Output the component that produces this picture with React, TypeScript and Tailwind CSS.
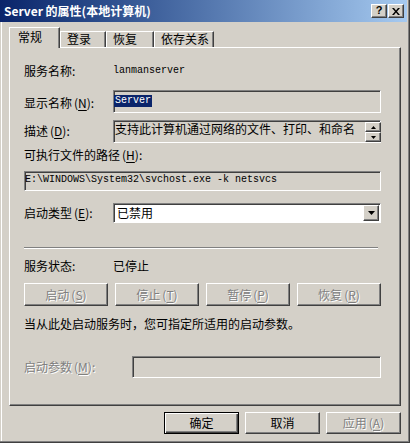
const raised =
  'border border-t-white border-l-white border-r-[#404040] border-b-[#404040] shadow-[inset_-1px_-1px_#808080]';
const sunken =
  'border border-t-[#808080] border-l-[#808080] border-r-white border-b-white shadow-[inset_1px_1px_#404040]';
const disabledText = 'text-[#808080] [text-shadow:1px_1px_0_#fff]';

// 带助记符的标签，例如 显示名称(N):
const Mn = ({ text, k, colon = true }: { text: string; k: string; colon?: boolean }) => (
  <span className="whitespace-nowrap">
    {text}
    <span className="ml-[2px]">(</span>
    <span className="underline underline-offset-[2px]">{k}</span>)
    {colon ? ':' : ''}
  </span>
);

const TitleBar = () => (
  <div className="w-[407px] h-[22px] shrink-0 flex items-center bg-linear-to-r from-[#0a246a] to-[#a6caf0] pl-[4px] pr-[3px]">
    <span className="flex-1 text-white font-bold text-[12px] leading-[14px] whitespace-nowrap">
      Server 的属性(本地计算机)
    </span>
    <div className="flex gap-[1px]">
      <div className={`w-[16px] h-[14px] bg-[#d4d0c8] ${raised} flex items-center justify-center`}>
        <span className="font-['Liberation_Sans',sans-serif] font-bold text-[11px] leading-[11px] -mt-px">?</span>
      </div>
      <div className={`w-[16px] h-[14px] bg-[#d4d0c8] ${raised} flex items-center justify-center`}>
        <svg width="8" height="7" viewBox="0 0 8 7">
          <path d="M0 0h2l2 2.5L6 0h2L5 3.5 8 7H6L4 4.5 2 7H0l3-3.5z" fill="#000" />
        </svg>
      </div>
    </div>
  </div>
);

const tabs = [
  { name: '登录', w: 'w-[46px]' },
  { name: '恢复', w: 'w-[48px]' },
  { name: '依存关系', w: 'w-[60px]' },
];

const Tabs = () => (
  <div className="relative z-10 mt-[5px] ml-[9px] h-[21px] -mb-px flex items-end shrink-0">
    <div className="w-[51px] h-[21px] bg-[#d4d0c8] border-t border-l border-r border-t-white border-l-white border-r-[#404040] shadow-[inset_-1px_0_#808080] pl-[8px] pt-[2px]">
      常规
    </div>
    {tabs.map((t) => (
      <div
        key={t.name}
        className={`${t.w} h-[16px] mb-px bg-[#d4d0c8] border-t border-l border-r border-t-white border-l-white border-r-[#404040] shadow-[inset_-1px_0_#808080] pl-[6px]`}
      >
        {t.name}
      </div>
    ))}
  </div>
);

const Button = ({ children, disabled }: { children: React.ReactNode; disabled?: boolean }) => (
  <div
    className={`w-[84px] h-[23px] bg-[#d4d0c8] ${raised} flex items-center justify-center ${disabled ? disabledText : ''}`}
  >
    {children}
  </div>
);

const Panel = () => (
  <div className="ml-[9px] w-[392px] h-[359px] shrink-0 border border-t-white border-l-white border-r-[#404040] border-b-[#404040] shadow-[inset_-1px_-1px_#808080] pl-[14px] pr-[19px] flex flex-col">
    {/* 服务名称 */}
    <div className="mt-[16px] h-[14px] flex items-center">
      <span className="w-[89px]">服务名称:</span>
      <span className="font-['Liberation_Mono',monospace] text-[10px]">lanmanserver</span>
    </div>

    {/* 显示名称 */}
    <div className="mt-[12px] h-[23px] flex items-center">
      <span className="w-[89px] mt-[2px]">
        <Mn text="显示名称" k="N" />
      </span>
      <div className={`flex-1 h-full ${sunken}`}>
        <span className="inline-block h-[12px] leading-[12px] bg-[#0a246a] text-white font-['Liberation_Mono',monospace] text-[10px] px-px">
          Server
        </span>
      </div>
    </div>

    {/* 描述 */}
    <div className="mt-[7px] h-[23px] flex items-center">
      <span className="w-[89px] mt-[-1px]">
        <Mn text="描述" k="D" />
      </span>
      <div className={`flex-1 h-full ${sunken} flex items-start pl-[1px] pt-[1px]`}>
        <span className="flex-1 whitespace-nowrap">支持此计算机通过网络的文件、打印、和命名</span>
        <div className="flex flex-col w-[16px] mr-[-1px]">
          <div className={`h-[10px] ${raised} flex items-center justify-center`}>
            <svg width="5" height="3" viewBox="0 0 5 3">
              <path d="M2.5 0 5 3H0z" fill="#000" />
            </svg>
          </div>
          <div className={`h-[10px] ${raised} flex items-center justify-center`}>
            <svg width="5" height="3" viewBox="0 0 5 3">
              <path d="M0 0h5L2.5 3z" fill="#000" />
            </svg>
          </div>
        </div>
      </div>
    </div>

    {/* 可执行文件路径 */}
    <div className="mt-[5px] h-[14px] flex items-center">
      <Mn text="可执行文件的路径" k="H" />
    </div>
    <div className={`mt-[9px] h-[20px] ${sunken} flex items-start pt-[2px]`}>
      <span className="font-['Liberation_Mono',monospace] text-[10px] leading-[12px] whitespace-pre">
        E:\WINDOWS\System32\svchost.exe -k netsvcs
      </span>
    </div>

    {/* 启动类型 */}
    <div className="mt-[12px] h-[20px] flex items-center">
      <span className="w-[89px]">
        <Mn text="启动类型" k="E" />
      </span>
      <div className={`flex-1 h-full bg-white ${sunken} flex items-center pl-[3px] pr-px`}>
        <span className="flex-1">已禁用</span>
        <div className={`w-[16px] h-[16px] bg-[#d4d0c8] ${raised} flex items-center justify-center`}>
          <svg width="7" height="4" viewBox="0 0 7 4">
            <path d="M0 0h7L3.5 4z" fill="#000" />
          </svg>
        </div>
      </div>
    </div>

    {/* 分隔线 */}
    <div className="mt-[24px] mr-[3px] h-[2px] border-t border-t-[#808080] border-b border-b-white" />

    {/* 服务状态 */}
    <div className="mt-[10px] h-[14px] flex items-center">
      <span className="w-[89px]">服务状态:</span>
      <span>已停止</span>
    </div>

    <div className="mt-[10px] flex justify-between">
      <Button disabled>
        <Mn text="启动" k="S" colon={false} />
      </Button>
      <Button disabled>
        <Mn text="停止" k="T" colon={false} />
      </Button>
      <Button disabled>
        <Mn text="暂停" k="P" colon={false} />
      </Button>
      <Button disabled>
        <Mn text="恢复" k="R" colon={false} />
      </Button>
    </div>

    <div className="mt-[11px] h-[14px] flex items-center whitespace-nowrap">
      当从此处启动服务时，您可指定所适用的启动参数。
    </div>

    {/* 启动参数 */}
    <div className="mt-[25px] h-[22px] flex items-center">
      <span className={`w-[108px] ${disabledText}`}>
        <Mn text="启动参数" k="M" />
      </span>
      <div className={`flex-1 h-full ${sunken}`} />
    </div>
  </div>
);

const Footer = () => (
  <div className="mt-[6px] ml-[9px] w-[392px] flex justify-end gap-[6px]">
    <div className="w-[75px] h-[22px] border border-black shadow-[inset_1px_1px_#fff,inset_-1px_-1px_#404040,inset_-2px_-2px_#808080] flex items-center justify-center">
      确定
    </div>
    <div className={`w-[75px] h-[22px] ${raised} flex items-center justify-center`}>取消</div>
    <div className={`w-[75px] h-[22px] ${raised} flex items-center justify-center ${disabledText}`}>
      <Mn text="应用" k="A" colon={false} />
    </div>
  </div>
);

export default function App() {
  return (
    <div className="w-[410px] h-[443px] bg-[#d4d0c8] flex flex-col overflow-hidden shadow-[inset_-1px_-1px_#404040,inset_-2px_-2px_#808080,inset_1px_0_#d4d0c8,inset_2px_0_#fff] font-['Noto_Sans_CJK_SC',sans-serif] text-[12px] leading-[14px] text-black select-none">
      <TitleBar />
      <Tabs />
      <Panel />
      <Footer />
    </div>
  );
}
